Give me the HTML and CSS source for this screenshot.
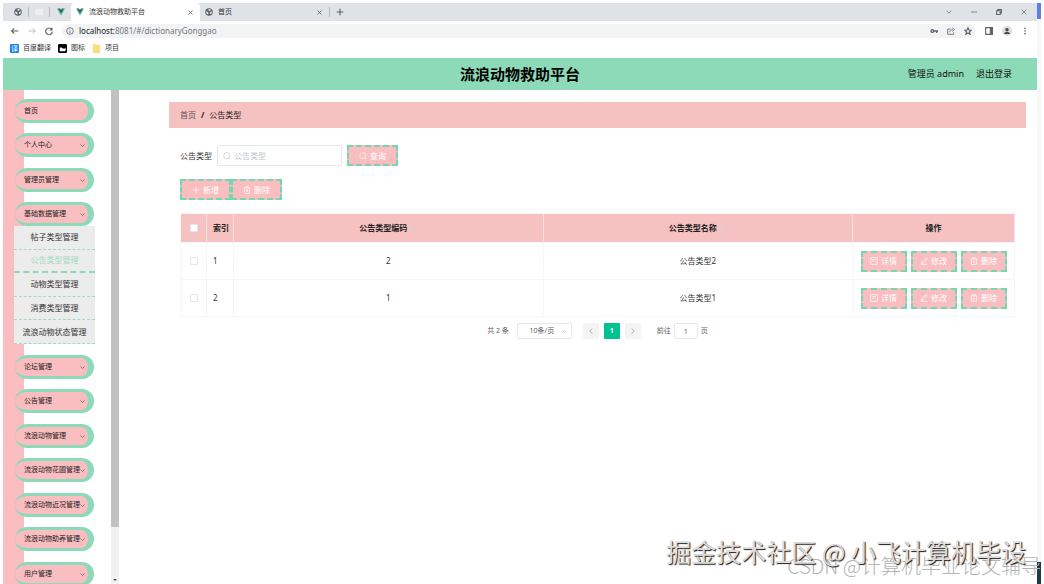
FILE: index.html
```html
<!DOCTYPE html>
<html lang="zh-CN">
<head>
<meta charset="utf-8">
<title>流浪动物救助平台</title>
<link rel="stylesheet" href="styles.css">
</head>
<body>
<svg class="sprite" aria-hidden="true">
  <symbol id="globe" viewBox="0 0 16 16"><circle cx="8" cy="8" r="7.5" fill="#5f6368"/><path d="M2 7l4 1 1 3-1 2-3-2zM7 2l5 1-2 3-3-1zM10 8l4-1-1 4-3 1z" fill="#e8eaed"/></symbol>
  <symbol id="vue" viewBox="0 0 16 14"><path d="M0 0h4l4 7 4-7h4L8 14z" fill="#41b883"/><path d="M3 0h3l2 3.500 2-3.500h3L8 9z" fill="#35495e"/></symbol>
  <symbol id="x" viewBox="0 0 10 10"><path d="M1 1l8 8M9 1l-8 8"/></symbol>
  <symbol id="down" viewBox="0 0 10 6"><path d="M1 1l4 4 4-4"/></symbol>
  <symbol id="search" viewBox="0 0 12 12"><circle cx="5.500" cy="5.500" r="4.500"/><path d="M9 9l2 2"/></symbol>
  <symbol id="plus" viewBox="0 0 12 12"><path d="M6 1v10M1 6h10"/></symbol>
  <symbol id="trash" viewBox="0 0 12 12"><path d="M1 3h10M4 3V1h4v2M2 3v8h8V3M5 5v4M7 5v4"/></symbol>
  <symbol id="doc" viewBox="0 0 12 12"><path d="M1 1h10v10H1zM3 4h6M3 6h3M8 7l2 2"/></symbol>
  <symbol id="edit" viewBox="0 0 12 12"><path d="M3 7l6-6 2 2-6 6-3 1zM1 11h10"/></symbol>
</svg>

<div class="browser">
  <div class="tabs">
    <div class="pin"><svg class="ic8"><use href="#globe"/></svg></div>
    <div class="pin"><span class="blank"></span></div>
    <div class="pin last"><svg class="ic8"><use href="#vue"/></svg></div>
    <div class="tab active"><svg class="ic8"><use href="#vue"/></svg><span>流浪动物救助平台</span><button class="bare" aria-label="关闭"><svg class="ic5 line bold"><use href="#x"/></svg></button></div>
    <div class="tab"><svg class="ic8"><use href="#globe"/></svg><span>首页</span><button class="bare" aria-label="关闭"><svg class="ic5 line bold"><use href="#x"/></svg></button></div>
    <button class="bare add" aria-label="新标签页"><svg class="ic8 line bold"><use href="#plus"/></svg></button>
    <div class="window">
      <button class="bare" aria-label="标签"><svg class="ic6 line"><use href="#down"/></svg></button>
      <button class="bare" aria-label="最小化"><svg class="ic6 line" viewBox="0 0 10 10"><path d="M0 5h10"/></svg></button>
      <button class="bare" aria-label="还原"><svg class="ic6 line bold" viewBox="0 0 10 10"><path d="M1 3h6v6H1zM3 3V1h6v6H7"/></svg></button>
      <button class="bare" aria-label="关闭窗口"><svg class="ic6 line"><use href="#x"/></svg></button>
    </div>
  </div>
  <div class="address">
    <button class="bare" aria-label="后退"><svg class="ic8 line bold" viewBox="0 0 12 12"><path d="M11 6H1M5 2L1 6l4 4"/></svg></button>
    <button class="bare off" aria-label="前进"><svg class="ic8 line" viewBox="0 0 12 12"><path d="M1 6h10M7 2l4 4-4 4"/></svg></button>
    <button class="bare" aria-label="刷新"><svg class="ic8 line bold" viewBox="0 0 12 12"><path d="M10 3.500A5 5 0 1 0 11 7M10.500 1v3.500H7"/></svg></button>
    <div class="url">
      <svg class="ic8 line" viewBox="0 0 12 12"><circle cx="6" cy="6" r="5"/><path d="M6 5.500V9M6 3v1"/></svg>
      <span>localhost:<i>8081/#/dictionaryGonggao</i></span>
      <div class="urlicons">
        <svg class="ic8" viewBox="0 0 12 12"><path fill="#5f6368" fill-rule="evenodd" d="M3.500 3a3 3 0 0 1 2.800 2H12v2h-1v2H9V7H6.300A3 3 0 1 1 3.500 3zm0 2a1 1 0 1 0 0 2 1 1 0 0 0 0-2z"/></svg>
        <svg class="ic8 line" viewBox="0 0 12 12"><path d="M5 3H1v8h9V8M4 8c0-3 2-4 5-4M8 1l3 3-3 3"/></svg>
        <svg class="ic8 line bold" viewBox="0 0 12 12"><path d="M6 1l1.500 3.500 3.500.3-2.700 2.400.9 3.800L6 9l-3.200 2 .9-3.800L1 4.800l3.500-.3z"/></svg>
      </div>
    </div>
    <svg class="ic8 line bold" viewBox="0 0 12 12"><path d="M1 1h10v10H1z"/><path d="M8 1h3v10H8z" fill="#5f6368"/></svg>
    <svg class="avatar" viewBox="0 0 12 12"><circle cx="6" cy="6" r="6" fill="#dadce0"/><circle cx="6" cy="4.500" r="2" fill="#46494d"/><path d="M2.500 9.500c0-3 7-3 7 0z" fill="#46494d"/></svg>
    <svg class="ic8 dots" viewBox="0 0 12 12"><circle cx="6" cy="2" r="1.200"/><circle cx="6" cy="6" r="1.200"/><circle cx="6" cy="10" r="1.200"/></svg>
  </div>
  <nav class="bookmarks">
    <a href="#"><span class="mark blue">译</span>百度翻译</a>
    <a href="#"><svg class="mark" viewBox="0 0 10 10"><rect width="10" height="10" rx="1"/><path d="M2 4h2l1 1h4l-1 3H2z" fill="#fff"/></svg>图标</a>
    <a href="#"><svg class="mark" viewBox="0 0 10 10"><path d="M1 0h3l1 1h4v9H1z" fill="#fcdc7c"/></svg>项目</a>
  </nav>
</div>
<div class="edge"><div class="edge-top"></div><div class="edge-bottom"></div></div>

<div class="app">
  <header class="header">
    <h1>流浪动物救助平台</h1>
    <div class="user"><span>管理员 admin</span><a href="#">退出登录</a></div>
  </header>
  <div class="body">
    <aside class="side">
      <ul class="menu">
        <li><a href="#">首页</a></li>
        <li><a href="#">个人中心<svg class="arrow"><use href="#down"/></svg></a></li>
        <li><a href="#">管理员管理<svg class="arrow"><use href="#down"/></svg></a></li>
        <li><a href="#">基础数据管理<svg class="arrow"><use href="#down"/></svg></a>
          <ul class="sub">
            <li><a href="#">帖子类型管理</a></li>
            <li class="on"><a href="#">公告类型管理</a></li>
            <li><a href="#">动物类型管理</a></li>
            <li><a href="#">消费类型管理</a></li>
            <li><a href="#">流浪动物状态管理</a></li>
          </ul>
        </li>
        <li><a href="#">论坛管理<svg class="arrow"><use href="#down"/></svg></a></li>
        <li><a href="#">公告管理<svg class="arrow"><use href="#down"/></svg></a></li>
        <li><a href="#">流浪动物管理<svg class="arrow"><use href="#down"/></svg></a></li>
        <li><a href="#">流浪动物花圃管理<svg class="arrow"><use href="#down"/></svg></a></li>
        <li><a href="#">流浪动物近况管理<svg class="arrow"><use href="#down"/></svg></a></li>
        <li><a href="#">流浪动物助养管理<svg class="arrow"><use href="#down"/></svg></a></li>
        <li><a href="#">用户管理<svg class="arrow"><use href="#down"/></svg></a></li>
      </ul>
      <div class="scroll"><div class="thumb"></div><svg viewBox="0 0 8 8"><path d="M2 3h4L4 5z" fill="#505050"/></svg></div>
    </aside>
    <main class="main">
      <nav class="crumb"><a href="#">首页</a><b>/</b><span>公告类型</span></nav>
      <div class="content">
        <form class="filter">
          <label for="kind">公告类型</label>
          <div class="field"><svg class="ic8"><use href="#search"/></svg><input id="kind" type="text" placeholder="公告类型"></div>
          <button type="button" class="btn wide"><svg class="ic8"><use href="#search"/></svg>查询</button>
        </form>
        <div class="tools">
          <button class="btn wide"><svg class="ic8"><use href="#plus"/></svg>新增</button><button class="btn wide"><svg class="ic8"><use href="#trash"/></svg>删除</button>
        </div>
        <table class="grid">
          <colgroup><col class="c-check"><col class="c-index"><col><col><col class="c-ops"></colgroup>
          <thead><tr>
            <th><input type="checkbox" aria-label="全选"></th><th>索引</th>
            <th>公告类型编码<svg class="sort" viewBox="0 0 6 10"><path d="M0 4l3-3 3 3zM0 6l3 3 3-3z"/></svg></th>
            <th>公告类型名称<svg class="sort" viewBox="0 0 6 10"><path d="M0 4l3-3 3 3zM0 6l3 3 3-3z"/></svg></th>
            <th>操作</th>
          </tr></thead>
          <tbody>
            <tr><td><input type="checkbox" aria-label="选择 1"></td><td class="idx">1</td><td>2</td><td>公告类型2</td>
              <td><div class="ops"><button class="btn"><svg class="ic8"><use href="#doc"/></svg>详情</button><button class="btn"><svg class="ic8"><use href="#edit"/></svg>修改</button><button class="btn"><svg class="ic8"><use href="#trash"/></svg>删除</button></div></td></tr>
            <tr><td><input type="checkbox" aria-label="选择 2"></td><td class="idx">2</td><td>1</td><td>公告类型1</td>
              <td><div class="ops"><button class="btn"><svg class="ic8"><use href="#doc"/></svg>详情</button><button class="btn"><svg class="ic8"><use href="#edit"/></svg>修改</button><button class="btn"><svg class="ic8"><use href="#trash"/></svg>删除</button></div></td></tr>
          </tbody>
        </table>
        <div class="pager">
          <span>共 2 条</span>
          <div class="size"><select aria-label="每页条数"><option>10条/页</option></select><svg><use href="#down"/></svg></div>
          <div class="pages">
            <button aria-label="上一页"><svg viewBox="0 0 6 10"><path d="M5 1L1 5l4 4"/></svg></button>
            <button class="now">1</button>
            <button aria-label="下一页"><svg viewBox="0 0 6 10"><path d="M1 1l4 4-4 4"/></svg></button>
          </div>
          <label class="jump">前往<input type="text" value="1">页</label>
        </div>
      </div>
    </main>
  </div>
</div>
<div class="watermark csdn">CSDN @计算机毕业论文辅导</div>
<div class="watermark juejin">掘金技术社区 @ 小飞计算机毕设</div>
</body>
</html>
```
FILE: styles.css
```css
* { box-sizing: border-box; }
body {
  margin: 0;
  padding: 3px 3px 0 3px;
  height: 100vh;
  overflow: hidden;
  display: grid;
  grid-template-columns: 1fr 4px;
  grid-template-rows: auto 1fr;
  background: #fff;
  color: #333;
  font: 8px/12px "Noto Sans", "Noto Sans CJK SC", sans-serif;
}
a { color: inherit; text-decoration: none; }
ul { margin: 0; padding: 0; list-style: none; }
button, input, select { font: inherit; color: inherit; margin: 0; }
.sprite { position: absolute; width: 0; height: 0; }
.ic8 { width: 8px; height: 8px; flex: none; }
.ic6 { width: 6px; height: 6px; }
.ic5 { width: 5px; height: 5px; }
.line { fill: none; stroke: #5f6368; stroke-width: 1.2; }
.bold { stroke-width: 1.7; }
.bare { border: 0; padding: 0; background: none; display: flex; align-items: center; }

/* Browser chrome */
.browser { min-width: 0; font-size: 7px; }
.tabs { display: flex; height: 18px; background: #dfe2e7; }
.pin { width: 21px; display: flex; align-items: center; justify-content: center; margin: 4px 0; border-right: 1px solid #b5b9be; }
.pin:first-child { width: 26px; padding-left: 4px; }
.pin.last { border: 0; }
.blank { width: 8px; height: 6px; background: #eceef0; }
.tab { width: 129px; padding: 0 7px 0 5px; display: flex; align-items: center; gap: 5px; }
.tab .bare { margin-left: auto; }
.tab.active { background: #fff; border-radius: 4px 4px 0 0; }
.add { padding: 0 6px; margin: 4px 0; border-left: 1px solid #b5b9be; }
.window { margin-left: auto; display: flex; gap: 19px; padding-right: 10px; }
.address { height: 20px; display: flex; align-items: center; gap: 9px; padding: 0 8px; }
.off { opacity: .5; }
.url { flex: 1; height: 14px; border-radius: 7px; background: #f1f3f4; display: flex; align-items: center; gap: 5px; padding: 0 4px; font-size: 8px; color: #222; }
.url i { font-style: normal; color: #75787c; }
.urlicons { display: flex; gap: 9px; margin-left: auto; }
.avatar { width: 10px; height: 10px; }
.dots { fill: #5f6368; }
.bookmarks { height: 17px; display: flex; align-items: center; gap: 7px; padding: 0 7px 3px; }
.bookmarks a { display: flex; align-items: center; gap: 4px; }
.mark { width: 9px; height: 9px; border-radius: 1px; }
.blue { background: #1b83ee; color: #fff; line-height: 9px; text-align: center; }

/* Window edge */
.edge { grid-column: 2; grid-row: 1 / 3; background: #f7f8fa; display: flex; flex-direction: column; justify-content: space-between; }
.edge-top { height: 16px; background: #5f7fe8; }
.edge-bottom { height: 22px; background: #1d3b44; }

/* Application */
.app { grid-column: 1; grid-row: 2; min-width: 0; min-height: 0; display: flex; flex-direction: column; }
.header { height: 32px; flex: none; background: #8cdab7; display: grid; grid-template-columns: 1fr auto 1fr; align-items: center; color: #111; }
.header h1 { grid-column: 2; margin: 0; font-size: 15px; line-height: 20px; font-weight: 700; color: #000; }
.user { justify-self: end; display: flex; gap: 12px; padding-right: 25px; font-size: 9px; }
.body { flex: 1; min-height: 0; display: flex; }
.side { width: 116px; flex: none; display: flex; justify-content: space-between; overflow: hidden; background: linear-gradient(to right, #fabdc0 21px, #fff 21px); }
.menu { width: 81px; margin-left: 11px; padding-top: 9px; font-size: 7px; }
.menu > li { margin-bottom: 10px; }
.menu > li:nth-child(even) { margin-bottom: 11px; }
.menu > li > a { height: 24px; margin: 0 1px; padding-left: 9px; padding-right: 3px; display: flex; align-items: center; justify-content: space-between; color: #222; background: #fabdc0; border: solid #8cdab7; border-width: 3px 6px 3px 0; border-radius: 12px; white-space: nowrap; }
.arrow { width: 5px; height: 3px; flex: none; fill: none; stroke: #96797c; stroke-width: 2; }
.sub { height: 118px; display: grid; grid-template-rows: repeat(5, 1fr); font-size: 8px; background: #ececec; text-align: center; }
.sub li { display: grid; align-items: center; border-bottom: 1px dashed #9fdcc2; }
.sub .on { color: #9edcc2; border-bottom: 2px dashed #8cdab7; }
.scroll { width: 8px; background: #f1f1f1; display: flex; flex-direction: column; justify-content: space-between; }
.thumb { height: 88.5%; background: #c1c1c1; }

.main { flex: 1; min-width: 0; padding: 12px 11px 0 50px; }
.crumb { height: 26px; padding: 0 11px; display: flex; align-items: center; gap: 5px; background: #f6c1c1; color: #222; }
.crumb a { color: #555; }
.content { padding: 17px 11px 0; }
.filter { display: flex; align-items: center; gap: 5px; }
.field { width: 125px; height: 21px; padding: 0 5px; display: flex; align-items: center; gap: 3px; border: 1px solid #e4e7ed; border-radius: 2px; }
.field svg { fill: none; stroke: #c0c4cc; }
.field input { width: 100%; border: 0; padding: 0; outline: 0; background: none; }
.field input::placeholder { color: #c0c4cc; opacity: 1; }
.btn { width: 46px; height: 21px; padding: 0; display: inline-flex; align-items: center; justify-content: center; gap: 3px; border: 2px dashed #73d8ae; background: #fabdc0; color: #fff; }
.btn svg { fill: none; stroke: #fff; }
.wide { width: 51px; }
.tools { display: flex; margin: 13px 0; }

.grid { width: 100%; table-layout: fixed; border-collapse: collapse; text-align: center; border: 1px solid #f5f6f9; }
.c-check { width: 26px; }
.c-index { width: 27px; }
.c-ops { width: 162px; }
.grid th { height: 29px; padding: 0; background: #f6c1c1; color: #222; border-right: 1px solid #fae0e0; }
.grid td { height: 37px; padding: 0; border: 1px solid #f5f6f9; }
.grid td.idx, .grid th:nth-child(2) { text-align: left; padding-left: 6px; }
.grid input { appearance: none; display: block; width: 8px; height: 8px; margin: 0 auto; border: 1px solid #e2e5ea; border-radius: 1px; background: #fff; }
.sort { width: 4px; height: 8px; margin-left: 6px; vertical-align: middle; fill: #c6cedb; }
.ops { display: flex; justify-content: center; gap: 4px; }

.pager { margin-top: 6px; display: flex; align-items: center; justify-content: center; gap: 8px; color: #606266; font-size: 7px; }
.size { width: 55px; height: 16px; display: flex; align-items: center; padding: 0 4px; border: 1px solid #e4e7ed; border-radius: 2px; }
.size select { appearance: none; flex: 1; min-width: 0; border: 0; padding: 0; background: none; text-align: center; text-align-last: center; }
.size svg { width: 5px; height: 3px; fill: none; stroke: #c0c4cc; stroke-width: 2; }
.pages { display: flex; gap: 5px; padding: 0 8px 0 3px; }
.pages button { width: 16px; height: 16px; padding: 0; border: 0; border-radius: 1px; background: #f4f4f5; display: grid; place-items: center; }
.pages svg { width: 4px; height: 6px; fill: none; stroke: #a6a9ad; stroke-width: 1.5; }
.pages .now { background: #00c292; color: #fff; font-weight: 700; }
.jump { display: flex; align-items: center; gap: 3px; }
.jump input { width: 24px; height: 16px; padding: 0; text-align: center; border: 1px solid #e4e7ed; border-radius: 2px; background: #fff; }

/* Overlaid marks */
.watermark { position: absolute; white-space: nowrap; font-family: "Noto Sans CJK SC", sans-serif; }
.juejin { right: 18px; bottom: 15px; font-size: 25px; line-height: 36px; color: #dcdcdc; text-shadow: 1px 1px 1px #1c1c1c; }
.csdn { right: 3px; bottom: 4px; font-size: 20px; line-height: 28px; font-weight: 300; color: #b4b4b4; }
```
